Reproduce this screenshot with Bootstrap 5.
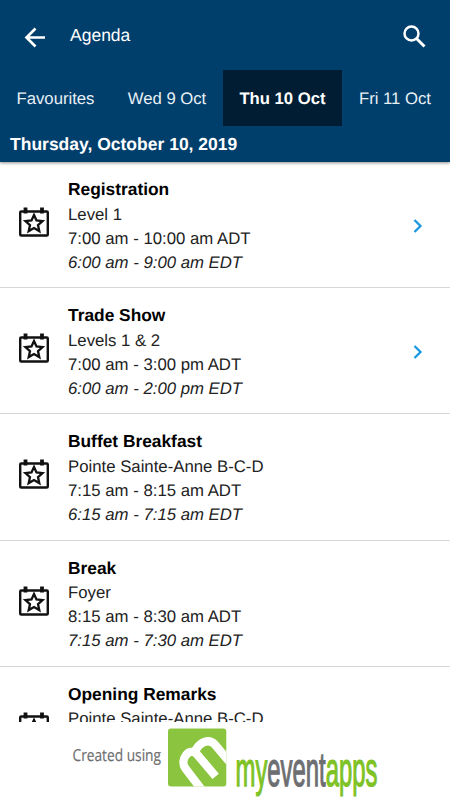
<!DOCTYPE html>
<html lang="en">
<head>
<meta charset="utf-8">
<meta name="viewport" content="width=device-width, initial-scale=1">
<title>Agenda</title>
<link rel="stylesheet" href="https://cdn.jsdelivr.net/npm/bootstrap@5.3.0/dist/css/bootstrap.min.css">
<style>
body{height:800px;font-family:"Liberation Sans",Arial,sans-serif;color:#222;overflow:hidden;text-rendering:geometricPrecision}
.top{background:#003e6b;height:162px;box-shadow:0 1px 3px rgba(0,0,0,.45);z-index:2}
.bar{height:70px;padding:2px 24px 0 23px}
.bar-title{font-size:17.5px;margin-left:23px;line-height:20px;padding-bottom:2px}
.days{height:56px;font-size:16.7px;color:#e9f0f6}
.day{height:56px;padding-top:2px}
.day-fav{width:111px}
.day-wed{width:112px}
.day-thu{width:119px;background:#001d33;font-weight:700;color:#fff}
.day-fri{width:106px}
.date-line{height:36px;padding-left:10px;font-size:17.5px;font-weight:700;line-height:36px}
.agenda{min-height:0}
.event{height:126.2px;flex:none;border-bottom:1px solid #d6d6d6;padding:15px 26px 0 18px}
.event-icon{width:32px;margin-top:30px;margin-right:18px}
.event h2{font-size:17.350px;font-weight:700;line-height:24.500px;margin:0;color:#000}
.event p{font-size:16.750px;line-height:24px;margin:0}
.event p:nth-of-type(1){padding-top:1px}
.event p:nth-of-type(3){line-height:23px}
.chev{margin-top:41px;fill:none;stroke:#1b98e0;stroke-width:2.300}
.foot{height:78px}
</style>
</head>
<body class="d-flex flex-column bg-white">
<svg class="d-none"><defs>
<symbol id="cal" viewBox="0 0 32 30"><path d="M7.500 0.500v6M24 0.500v6" stroke="#111" stroke-width="3.800" fill="none"/><rect x="2.200" y="4.500" width="27.600" height="24" rx="1" fill="none" stroke="#111" stroke-width="2.400"/><path d="M16 8l2.500 5.500 6 .6-4.500 4 1.300 6-5.300-3.100-5.300 3.100 1.300-6-4.500-4 6-.6z" fill="none" stroke="#111" stroke-width="2.300"/></symbol>
</defs></svg>
<header class="top position-relative text-white flex-shrink-0">
<div class="bar d-flex align-items-center">
<svg width="24" height="24" viewBox="0 0 24 24" fill="none" stroke="#fff" stroke-width="2.700"><path d="M22 13.500H4M12.500 4.500l-9 9 9 9"/></svg>
<span class="bar-title">Agenda</span>
<svg class="ms-auto" width="24" height="24" viewBox="0 0 24 24" fill="none" stroke="#fff" stroke-width="2.500"><circle cx="9.500" cy="9.500" r="7"/><path d="M14.500 14.500l8 8" stroke-width="3"/></svg>
</div>
<nav class="days d-flex">
<span class="day day-fav d-flex align-items-center justify-content-center">Favourites</span>
<span class="day day-wed d-flex align-items-center justify-content-center">Wed 9 Oct</span>
<span class="day day-thu d-flex align-items-center justify-content-center">Thu 10 Oct</span>
<span class="day day-fri d-flex align-items-center justify-content-center">Fri 11 Oct</span>
</nav>
<div class="date-line">Thursday, October 10, 2019</div>
</header>
<main class="agenda flex-grow-1 overflow-hidden d-flex flex-column">
<article class="event d-flex"><svg class="event-icon" height="30"><use href="#cal"/></svg><div><h2>Registration</h2><p>Level 1</p><p>7:00 am - 10:00 am ADT</p><p class="fst-italic">6:00 am - 9:00 am EDT</p></div><svg class="chev ms-auto" width="12" height="16"><path d="M2.500 2l6 6-6 6"/></svg></article>
<article class="event d-flex"><svg class="event-icon" height="30"><use href="#cal"/></svg><div><h2>Trade Show</h2><p>Levels 1 &amp; 2</p><p>7:00 am - 3:00 pm ADT</p><p class="fst-italic">6:00 am - 2:00 pm EDT</p></div><svg class="chev ms-auto" width="12" height="16"><path d="M2.500 2l6 6-6 6"/></svg></article>
<article class="event d-flex"><svg class="event-icon" height="30"><use href="#cal"/></svg><div><h2>Buffet Breakfast</h2><p>Pointe Sainte-Anne B-C-D</p><p>7:15 am - 8:15 am ADT</p><p class="fst-italic">6:15 am - 7:15 am EDT</p></div></article>
<article class="event d-flex"><svg class="event-icon" height="30"><use href="#cal"/></svg><div><h2>Break</h2><p>Foyer</p><p>8:15 am - 8:30 am ADT</p><p class="fst-italic">7:15 am - 7:30 am EDT</p></div></article>
<article class="event d-flex"><svg class="event-icon" height="30"><use href="#cal"/></svg><div><h2>Opening Remarks</h2><p>Pointe Sainte-Anne B-C-D</p></div></article>
</main>
<footer class="foot flex-shrink-0">
<svg class="d-block" width="450" height="78" viewBox="0 0 450 78">
<text x="72.500" y="39" font-family="Open Sans, Noto Sans, sans-serif" font-size="16.500" fill="#6e6e70" stroke="#6e6e70" stroke-width=".2" textLength="88.500" lengthAdjust="spacingAndGlyphs">Created using</text>
<clipPath id="tile"><rect x="168" y="6.500" width="58.300" height="58" rx="3"/></clipPath>
<g clip-path="url(#tile)"><path d="M168 6h59v59h-59z" fill="#8bc53f"/>
<g transform="translate(160 -2) scale(.33333)" fill="none" stroke="#fff" stroke-width="25"><path d="M125 209L76 145C58 120 87 79 111 103L167 169"/><path d="M104 97C116 67 146 53 164 73L214 132"/></g></g>
<text x="235.500" y="63.500" font-family="Liberation Sans, Arial, sans-serif" font-size="48" stroke-width="1.300" textLength="142" lengthAdjust="spacingAndGlyphs"><tspan fill="#7ec225" stroke="#7ec225">my</tspan><tspan fill="#6d6e71" stroke="#6d6e71">event</tspan><tspan fill="#7ec225" stroke="#7ec225">apps</tspan></text>
</svg>
</footer>
<script src="https://cdn.jsdelivr.net/npm/bootstrap@5.3.0/dist/js/bootstrap.bundle.min.js"></script>
</body>
</html>
